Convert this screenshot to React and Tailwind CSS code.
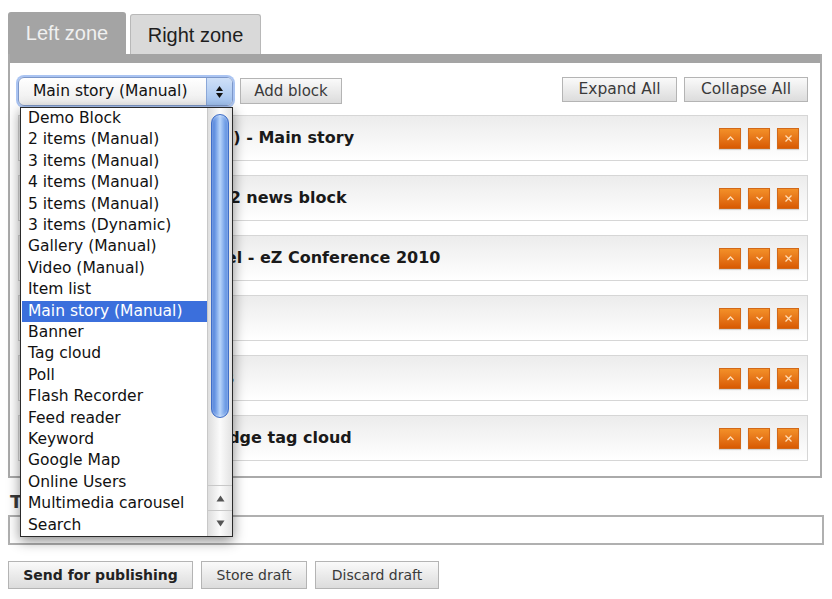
import React from "react";

const blockTypes = [
  "Demo Block",
  "2 items (Manual)",
  "3 items (Manual)",
  "4 items (Manual)",
  "5 items (Manual)",
  "3 items (Dynamic)",
  "Gallery (Manual)",
  "Video (Manual)",
  "Item list",
  "Main story (Manual)",
  "Banner",
  "Tag cloud",
  "Poll",
  "Flash Recorder",
  "Feed reader",
  "Keyword",
  "Google Map",
  "Online Users",
  "Multimedia carousel",
  "Search",
];

const blocks = [
  "Main story (Manual) - Main story",
  "2 items (Manual) - 2 news block",
  "Multimedia carousel - eZ Conference 2010",
  "Banner - Promo",
  "Feed reader - News",
  "Tag cloud - Knowledge tag cloud",
];

function Chevron({ dir }) {
  return (
    <svg width="9" height="7" viewBox="0 0 9 7" fill="none">
      <path
        d={dir === "up" ? "M1.5 5 L4.5 2 L7.5 5" : "M1.5 2 L4.5 5 L7.5 2"}
        stroke="#ffdcb4"
        strokeWidth="1.3"
      />
    </svg>
  );
}

function OrangeButton({ children }) {
  return (
    <div className="w-[22px] h-[21px] flex items-center justify-center bg-linear-to-b from-[#f39028] to-[#d85a02] border border-[#d2691a] shadow-[0_1px_1px_rgba(0,0,0,0.15)]">
      {children}
    </div>
  );
}

function GrayButton({ children, className }) {
  return (
    <div
      className={
        "flex items-center justify-center bg-linear-to-b from-[#fafafa] to-[#dcdcdc] border border-[#b4b4b4] text-[#3a3a3a] font-['DejaVu_Sans'] " +
        className
      }
    >
      {children}
    </div>
  );
}

function BlockRow({ title }) {
  return (
    <div className="h-[46px] flex items-center justify-between border border-[#d6d6d6] bg-linear-to-b from-[#ececec] to-white pl-[40px] pr-[8px]">
      <span className="font-['DejaVu_Sans'] font-bold text-[16px] text-[#1a1a1a] whitespace-nowrap">
        {title}
      </span>
      <div className="flex gap-[7px]">
        <OrangeButton>
          <Chevron dir="up" />
        </OrangeButton>
        <OrangeButton>
          <Chevron dir="down" />
        </OrangeButton>
        <OrangeButton>
          <svg width="9" height="9" viewBox="0 0 9 9">
            <path d="M1.5 1.5 L7.5 7.5 M7.5 1.5 L1.5 7.5" stroke="#ffdcb4" strokeWidth="1.3" />
          </svg>
        </OrangeButton>
      </div>
    </div>
  );
}

function Dropdown() {
  return (
    <div className="absolute top-[30px] left-[2px] w-[213px] h-[430px] bg-white border border-[#2a2a2a] shadow-[0_4px_12px_rgba(0,0,0,0.45)] flex z-10">
      <div className="flex-1 flex flex-col pl-[1px]">
        {blockTypes.map((t) => (
          <div
            key={t}
            className={
              "h-[21.4px] flex items-center pl-[6px] font-['DejaVu_Sans'] text-[15.5px] whitespace-nowrap " +
              (t === "Main story (Manual)" ? "bg-[#3b6fdc] text-white" : "text-[#111]")
            }
          >
            {t}
          </div>
        ))}
      </div>
      {/* scrollbar */}
      <div className="w-[25px] flex flex-col border-l border-[#c8c8c8] bg-linear-to-r from-[#dedede] via-[#fbfbfb] to-[#e2e2e2]">
        <div className="flex-1 pt-[6px] px-[3px] flex flex-col">
          <div className="h-[304px] rounded-full border border-[#3f6ec8] bg-linear-to-r from-[#3a70d4] via-[#b9d5fa] to-[#4a80da] shadow-[inset_0_0_3px_rgba(255,255,255,0.7)]" />
        </div>
        <div className="h-[25px] flex items-center justify-center border-t border-[#c8c8c8]">
          <svg width="9" height="7" viewBox="0 0 9 7">
            <path d="M4.5 0.5 L8.5 6.5 L0.5 6.5 Z" fill="#555" />
          </svg>
        </div>
        <div className="h-[26px] flex items-center justify-center border-t border-[#c8c8c8]">
          <svg width="9" height="7" viewBox="0 0 9 7">
            <path d="M0.5 0.5 L8.5 0.5 L4.5 6.5 Z" fill="#555" />
          </svg>
        </div>
      </div>
    </div>
  );
}

function Select() {
  return (
    <div className="relative">
      <div className="w-[215px] h-[29px] rounded-[6px] border border-[#7d97c8] shadow-[0_0_0_2px_rgba(125,165,235,0.65)] bg-linear-to-b from-white to-[#ececec] flex items-center overflow-hidden">
        <span className="flex-1 pl-[14px] font-['DejaVu_Sans'] text-[15.5px] text-[#111] whitespace-nowrap">
          Main story (Manual)
        </span>
        <div className="w-[26px] h-full flex flex-col items-center justify-center gap-[2px] border-l border-[#8aa7d8] bg-linear-to-b from-[#cfe0f8] to-[#9fc0ee]">
          <svg width="7" height="5" viewBox="0 0 7 5">
            <path d="M3.5 0 L7 5 L0 5 Z" fill="#111" />
          </svg>
          <svg width="7" height="5" viewBox="0 0 7 5">
            <path d="M0 0 L7 0 L3.5 5 Z" fill="#111" />
          </svg>
        </div>
      </div>
      <Dropdown />
    </div>
  );
}

export default function App() {
  return (
    <div className="w-[832px] h-[599px] bg-white overflow-hidden font-['Liberation_Sans']">
      <div className="pl-2 pt-3">
        {/* Tabs */}
        <div className="flex items-end gap-[4px]">
          <div className="w-[118px] h-[42px] bg-[#a4a4a4] rounded-t-[3px] flex items-center justify-center text-[20px] text-[#f0f0f0]">
            Left zone
          </div>
          <div className="w-[131px] h-[40px] bg-[#d9d9d9] border border-b-0 border-[#b8b8b8] rounded-t-[3px] flex items-center justify-center text-[20px] text-[#1e1e1e]">
            Right zone
          </div>
        </div>

        {/* Zone panel */}
        <div className="w-[814px] border-2 border-t-0 border-[#aaaaaa]">
          <div className="h-[9px] bg-[#a4a4a4]" />
          <div className="pl-2 pr-3 pt-[14px] pb-[15px]">
            <div className="h-[29px] flex items-start justify-between">
              <div className="flex items-start gap-[7px]">
                <Select />
                <GrayButton className="mt-[1px] w-[102px] h-[26px] text-[15px]">Add block</GrayButton>
              </div>
              <div className="flex gap-[7px]">
                <GrayButton className="w-[115px] h-[25px] text-[15.5px]">Expand All</GrayButton>
                <GrayButton className="w-[124px] h-[25px] text-[15.5px]">Collapse All</GrayButton>
              </div>
            </div>
            <div className="mt-[9px] flex flex-col gap-[14px]">
              {blocks.map((b) => (
                <BlockRow key={b} title={b} />
              ))}
            </div>
          </div>
        </div>

        {/* Title field */}
        <div className="h-[37px] pt-[10px] pl-[2px] font-['DejaVu_Sans'] font-bold text-[18px] text-[#3a3a3a]">
          Title
        </div>
        <div className="w-[816px] h-[30px] border-2 border-[#b0b0b0] bg-white" />

        {/* Actions */}
        <div className="mt-[16px] flex gap-[8px]">
          <GrayButton className="w-[185px] h-[28px] text-[14px] font-bold !text-[#222]">
            Send for publishing
          </GrayButton>
          <GrayButton className="w-[106px] h-[28px] text-[14px]">Store draft</GrayButton>
          <GrayButton className="w-[124px] h-[28px] text-[14px]">Discard draft</GrayButton>
        </div>
      </div>
    </div>
  );
}
